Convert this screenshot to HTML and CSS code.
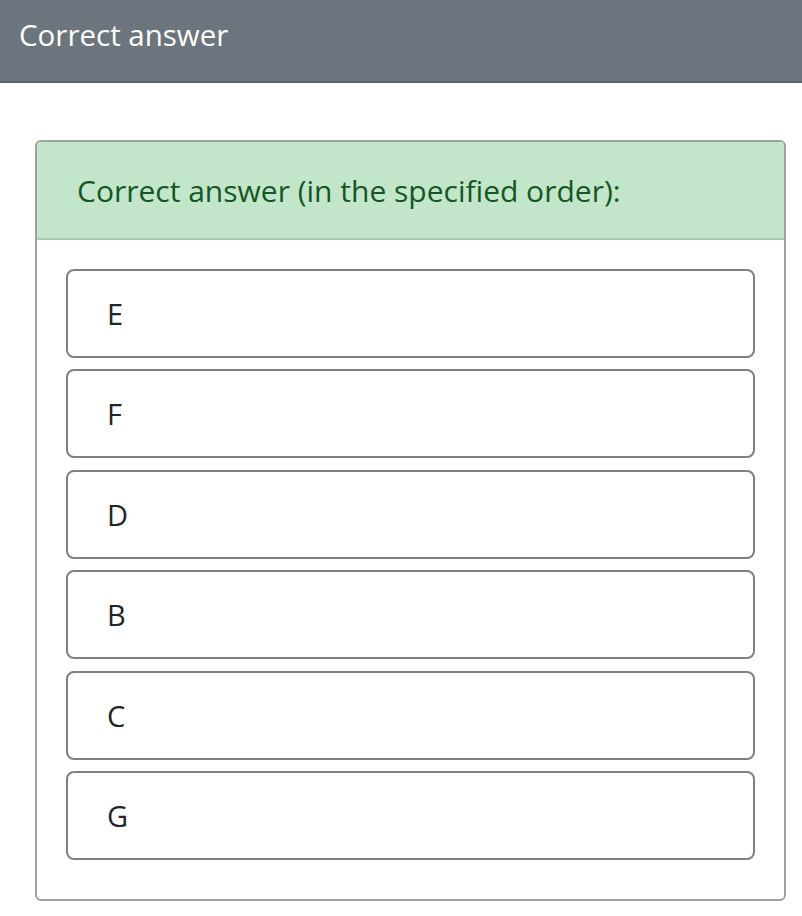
FILE: index.html
```html
<!DOCTYPE html>
<html lang="en">
<head>
<meta charset="utf-8">
<title>Correct answer</title>
<link rel="stylesheet" href="styles.css">
</head>
<body>
<header class="topbar">Correct answer</header>
<main class="content">
  <section class="card">
    <div class="card-header">Correct answer (in the specified order):</div>
    <div class="card-body">
      <div class="item">E</div>
      <div class="item">F</div>
      <div class="item">D</div>
      <div class="item">B</div>
      <div class="item">C</div>
      <div class="item">G</div>
    </div>
  </section>
</main>
</body>
</html>
```

FILE: styles.css
```css
html, body {
  margin: 0;
  padding: 0;
  background: #ffffff;
}
body {
  font-family: "Open Sans", "Noto Sans", sans-serif;
  color: #212529;
}
.topbar {
  box-sizing: border-box;
  height: 83px;
  background: #6c757d;
  border-bottom: 2px solid #5c636a;
  color: #ffffff;
  font-size: 29.5px;
  line-height: 36px;
  padding: 17px 0 0 19px;
}
.content {
  padding: 57px 16px 16px 35px;
}
.card {
  border: 2px solid #a0a0a0;
  border-radius: 6px;
  overflow: hidden;
}
.card-header {
  box-sizing: border-box;
  height: 98px;
  background: #c3e6cb;
  border-bottom: 2px solid #a9cdb2;
  color: #155724;
  font-size: 30px;
  display: flex;
  align-items: center;
  padding-left: 40px;
}
.card-body {
  padding: 29px 29px 39px 29px;
  display: flex;
  flex-direction: column;
  gap: 11.4px;
}
.item {
  box-sizing: border-box;
  height: 89px;
  border: 2px solid #808080;
  border-radius: 8px;
  display: flex;
  align-items: center;
  padding-left: 39px;
  font-size: 29px;
  color: #212529;
}
```
